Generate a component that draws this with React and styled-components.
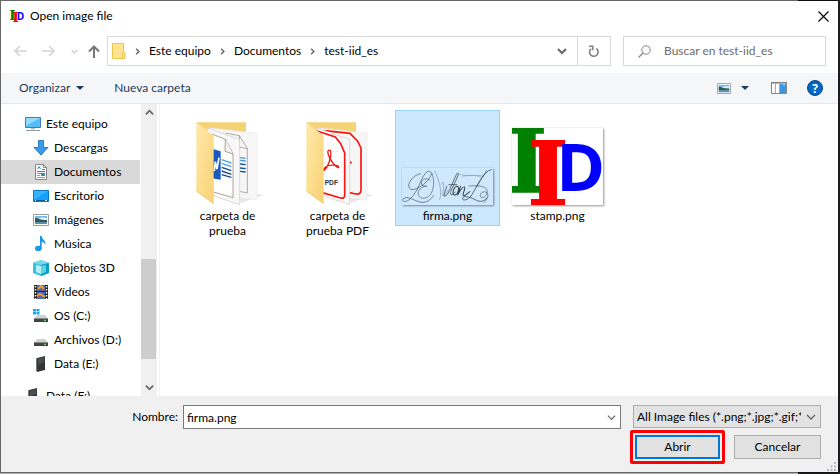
import React, { useState } from "react";
import styled, { createGlobalStyle, css } from "styled-components";

const Global = createGlobalStyle`
  * { box-sizing: border-box; }
  body {
    margin: 0;
    font-family: Lato, "Open Sans", sans-serif;
    font-size: 12px;
    line-height: 16px;
    color: #000;
  }
  button, input, select { font: inherit; color: inherit; margin: 0; }
  svg { display: block; flex: none; }
`;

const Desktop = styled.div`
  display: flex;
  height: 100vh;
  min-height: 320px;
  padding: 0 2px 1px 0;
  background: linear-gradient(90deg, #b0b0b0 95%, #1c1c1e 95%);
`;

const Dialog = styled.main`
  flex: 1;
  min-width: 0;
  display: flex;
  flex-direction: column;
  border: 1px solid rgba(0, 0, 0, 0.42);
  border-right: 0;
  background: #fff;
  background-clip: padding-box;
`;

const PlainButton = styled.button`
  display: flex;
  align-items: center;
  justify-content: center;
  padding: 0;
  border: 0;
  background: none;
`;

const TitleBar = styled.header`
  display: flex;
  align-items: center;
  gap: 6px;
  height: 30px;
  padding: 0 9px;
`;

const Title = styled.h1`
  flex: 1;
  margin: 0;
  font-size: 12px;
  font-weight: 400;
`;

const NavBar = styled.div`
  display: flex;
  align-items: center;
  height: 42px;
  padding: 0 12px 2px 13px;
`;

const History = styled.div`
  display: grid;
  grid-template-columns: 28px 29px 17px 19px;
  justify-items: start;
  align-items: center;
`;

const Address = styled.div`
  flex: 1;
  min-width: 0;
  display: flex;
  align-items: stretch;
  height: 30px;
  border: 1px solid #d9d9d9;
`;

const Crumbs = styled.nav`
  flex: 1;
  min-width: 0;
  display: flex;
  align-items: center;
  gap: 8px;
  padding-left: 4px;
  overflow: hidden;
  white-space: nowrap;
`;

const Crumb = styled(PlainButton)`
  white-space: nowrap;
`;

const AddressButton = styled(PlainButton)`
  width: ${(p) => p.$width}px;
  border-left: ${(p) => (p.$divided ? "1px solid #d9d9d9" : "0")};
`;

const Search = styled.label`
  display: flex;
  align-items: center;
  gap: 13px;
  width: 25%;
  height: 30px;
  margin-left: 12px;
  padding-left: 14px;
  border: 1px solid #d9d9d9;
`;

const SearchInput = styled.input`
  flex: 1;
  min-width: 0;
  padding: 0;
  border: 0;
  outline: 0;
  background: none;
  &::placeholder { color: #6d6d6d; opacity: 1; }
`;

const Toolbar = styled.div`
  display: flex;
  align-items: center;
  height: 31px;
  padding: 0 15px 0 18px;
  border-bottom: 1px solid #e6e6e6;
  background: #f5f6f7;
  color: #1e395b;
`;

const ToolButton = styled(PlainButton)`
  gap: 6px;
  margin-right: ${(p) => p.$after || 0}px;
`;

const Spacer = styled.div`
  flex: 1;
`;

const Body = styled.div`
  flex: 1;
  min-height: 0;
  display: flex;
`;

const Tree = styled.nav`
  flex: none;
  width: 139px;
  padding-top: 8px;
  overflow: hidden;
`;

const TreeItem = styled(PlainButton)`
  justify-content: flex-start;
  gap: 5px;
  width: 100%;
  height: 24px;
  padding-left: ${(p) => (p.$level === 1 ? 24 : 32)}px;
  margin-top: ${(p) => (p.$detached ? 8 : 0)}px;
  background: ${(p) => (p.$selected ? "#d9d9d9" : "transparent")};
  white-space: nowrap;
`;

const ScrollBar = styled.div`
  flex: none;
  display: flex;
  flex-direction: column;
  width: 17px;
  margin-left: 1px;
  background: #f0f0f0;
  border-right: 1px solid #fff;
`;

const ScrollButton = styled(PlainButton)`
  height: 17px;
`;

const ScrollTrack = styled.div`
  flex: 1;
  display: flex;
  align-items: flex-end;
  padding-bottom: 20px;
`;

const ScrollThumb = styled.div`
  width: 15px;
  height: 42%;
  background: #cdcdcd;
`;

const Files = styled.section`
  flex: 1;
  min-width: 0;
  display: flex;
  flex-wrap: wrap;
  align-content: flex-start;
  align-items: flex-start;
  gap: 5px;
  margin-left: 1px;
  padding: 6px 15px;
  border-left: 1px solid #f2f2f2;
`;

const Tile = styled.button`
  display: flex;
  flex-direction: column;
  align-items: center;
  justify-content: flex-start;
  width: 105px;
  min-height: 116px;
  padding: 1px 0;
  border: 1px solid transparent;
  background: none;
  line-height: 15px;
  ${(p) => p.$selected && css`
    border-color: #99d1ff;
    background: #cce8ff;
  `}
`;

const Preview = styled.span`
  display: flex;
  flex-direction: column;
  justify-content: flex-end;
  align-items: center;
  width: 96px;
  height: 95px;
  padding-bottom: 2px;
  margin-bottom: 1px;
`;

const Thumb = styled.span`
  background: ${(p) => (p.$clear ? "#cfe8fc" : "#fff")};
  box-shadow: 1px 1px 2px rgba(0, 0, 0, 0.4), 0 0 1px rgba(0, 0, 0, 0.2);
`;

const TileLabel = styled.span`
  width: 76px;
`;

const Footer = styled.footer`
  display: flex;
  flex-direction: column;
  height: 76px;
  padding: 9px 2px 2px 16px;
  background: #f0f0f0;
`;

const FieldRow = styled.div`
  display: flex;
  gap: 12px;
  padding-right: 15px;
`;

const NameLabel = styled.label`
  width: 166px;
  padding: 4px 5px 0 0;
  margin-right: -12px;
  text-align: right;
`;

const Combo = styled.div`
  flex: 1;
  min-width: 0;
  display: flex;
  height: 24px;
  border: 1px solid #7a7a7a;
  background: #fff;
`;

const ComboInput = styled.input`
  flex: 1;
  min-width: 0;
  padding: 2px 3px 0;
  border: 0;
  outline: 0;
  background: none;
`;

const ComboButton = styled(PlainButton)`
  width: 17px;
`;

const FilterBox = styled.div`
  display: grid;
  align-items: center;
  width: 188px;
  height: 23px;
  border: 1px solid #adadad;
  background: #e3e3e3;
  & > * { grid-area: 1 / 1; }
  & > svg { justify-self: end; margin-right: 4px; pointer-events: none; }
`;

const FilterSelect = styled.select`
  appearance: none;
  width: 167px;
  height: 21px;
  padding: 0 0 0 3px;
  border: 0;
  outline: 0;
  background: transparent;
  text-overflow: clip;
`;

const ActionRow = styled.div`
  display: flex;
  justify-content: flex-end;
  align-items: flex-start;
  gap: 9px;
  margin-top: 1px;
  padding-right: 15px;
`;

const Highlight = styled.div`
  padding: 2px;
  border: 3px solid #fb0007;
  border-radius: 2px;
`;

const Action = styled.button`
  display: block;
  width: ${(p) => (p.$primary ? 85 : 87)}px;
  height: 24px;
  padding: 0;
  margin-top: ${(p) => (p.$primary ? 0 : 5)}px;
  border: ${(p) => (p.$primary ? "2px solid #0078d7" : "1px solid #adadad")};
  background: #e1e1e1;
`;

const GripCorner = styled.div`
  display: flex;
  justify-content: flex-end;
  margin-top: -2px;
`;

/* ---------- drawings ---------- */

const Chevron = ({ dir = "down", size = 10, color = "#666", width = 1.5 }) => {
  const d = { down: "M1 3l4 4 4-4", up: "M1 7l4-4 4 4", right: "M3 1l4 4-4 4" }[dir];
  return (
    <svg width={size} height={size} viewBox="0 0 10 10" fill="none" stroke={color} strokeWidth={width}>
      <path d={d} />
    </svg>
  );
};

const Caret = () => (
  <svg width="8" height="4" viewBox="0 0 8 4"><path d="M0 0h8L4 4z" fill="#1e395b" /></svg>
);

const Arrow = ({ dir }) => {
  const d = {
    left: "M13 6H1M6 1L1 6l5 5",
    right: "M0 6h12M7 1l5 5-5 5",
    up: "M6 13V1.500M1 6.500l5-5 5 5",
  }[dir];
  return (
    <svg width="13" height="13" viewBox="0 0 13 13" fill="none" stroke={dir === "up" ? "#777" : "#d5d5d5"} strokeWidth={dir === "up" ? 2 : 1.6}>
      <path d={d} />
    </svg>
  );
};

const CloseIcon = () => (
  <svg width="11" height="11" viewBox="0 0 11 11" stroke="#000" strokeWidth="1.1"><path d="M.5.5l10 10M10.500.5l-10 10" /></svg>
);

const RefreshIcon = () => (
  <svg width="12" height="13" viewBox="0 0 12 13" fill="none" stroke="#808080" strokeWidth="1.6">
    <path d="M8.300 3.500A4.300 4.300 0 1 1 3 3.800" />
    <path d="M1 1.300h3.700v4" />
  </svg>
);

const SearchIcon = () => (
  <svg width="13" height="13" viewBox="0 0 13 13" fill="none" stroke="#858585">
    <circle cx="8" cy="5" r="4.200" /><path d="M5 8L.5 12.500" strokeWidth="1.300" />
  </svg>
);

const FolderSmall = () => (
  <svg width="14" height="16" viewBox="0 0 14 16">
    <path d="M.5.5h11v9h1.500v6H.5z" fill="#ffe38f" stroke="#ebc54d" />
    <path d="M10.500 15V9.500" stroke="#ebc54d" />
  </svg>
);

const Iid = ({ width, height }) => (
  <svg width={width} height={height} viewBox="0 0 270 229" preserveAspectRatio="none">
    <g fontFamily="'DejaVu Serif'" fontWeight="700" fontSize="260" textAnchor="middle">
      <text x="44" y="190" fill="#008000" stroke="#008000" strokeWidth="4">I</text>
      <text x="107" y="228" fill="#f00" stroke="#f00" strokeWidth="4">I</text>
    </g>
    <text x="131" y="187" fill="#00f" fontFamily="'Open Sans'" fontWeight="700" fontSize="196">D</text>
  </svg>
);

const Landscape = ({ width, height }) => (
  <svg width={width} height={height} viewBox="0 0 16 12" preserveAspectRatio="none">
    <path d="M.5.5h15v11H.5z" fill="#fff" stroke="#9b9b9b" />
    <path d="M2 2h12v8H2z" fill="#77b8ea" />
    <path d="M6 4.500c2-1.500 5-1 8-.5v2H7z" fill="#e4f2fb" />
    <path d="M2 4c3 0 4 2 12 2v2H2z" fill="#315c4d" />
    <path d="M2 8h12v2H2z" fill="#5d8fb2" />
  </svg>
);

const PaneIcon = () => (
  <svg width="16" height="12" viewBox="0 0 16 12">
    <path d="M.5.5h15v11H.5z" fill="#fff" stroke="#858585" />
    <path d="M0 .8h16" stroke="#858585" strokeWidth="1.600" />
    <path d="M4.500 2v9M8.500 2v9" stroke="#aaa" />
    <path d="M9 2h6v9H9z" fill="#3c96e0" />
    <path d="M12 3h2" stroke="#b8defa" />
  </svg>
);

const HelpIcon = () => (
  <svg width="16" height="16" viewBox="0 0 16 16">
    <circle cx="8" cy="8" r="7.500" fill="#0067c5" stroke="#074984" />
    <text x="8" y="12.500" fill="#fff" textAnchor="middle" fontFamily="'Open Sans'" fontSize="12" fontWeight="700">?</text>
  </svg>
);

const treeArt = {
  pc: <>
    <path d="M.5 1.500h15v10H.5z" fill="#55bdf5" stroke="#3e82ab" />
    <path d="M1 2h14L1 10z" fill="#94dbff" />
    <path d="M6 12h4v1.500H6z" fill="#b5c2ca" /><path d="M1 14.500h14" stroke="#8b9aa5" />
  </>,
  down: <path d="M5.500.5h5v7h4.500L8 15 1 7.500h4.500z" fill="#3c9aeb" stroke="#2a7dc5" />,
  doc: <>
    <path d="M2.500.5h8l3 3v12h-11z" fill="#fff" stroke="#858585" />
    <path d="M10.500.5v3h3" fill="none" stroke="#858585" />
    <path d="M4.500 5L6 2.500 7.500 5M9 5.500h3M4 7.500h8" fill="none" stroke="#3588bd" />
    <path d="M4 9.500h4M4 11.500h3M4 13.500h8" stroke="#8c9dab" /><path d="M8 9h4v3H8z" fill="#378cb9" />
  </>,
  desk: <>
    <path d="M.5 2.500h15v11H.5z" fill="#12a1fb" stroke="#0a78c4" />
    <path d="M1 3h14L1 12z" fill="#37b2ff" /><path d="M1 12.500h14" stroke="#075b9c" />
    <path d="M2 12.500h1M12 12.500h2" stroke="#fff" />
  </>,
  music: <>
    <ellipse cx="5.300" cy="12.500" rx="3.300" ry="2.700" fill="#1899e6" />
    <path d="M7 0h1.700c0 4 4.800 3.700 3.600 9.200-.5-2.400-1.600-3-3.600-3.200v6.500H7z" fill="#1899e6" />
  </>,
  cube: <>
    <path d="M0 3l8-3 8 3v10l-8 3-8-3z" fill="#35c0dc" />
    <path d="M0 3l8-3 8 3-8 2z" fill="#74d9e9" />
    <path d="M3 5l5 1v8l-5-2z" fill="#b4eff5" /><path d="M8 5l8-2v10l-8 3z" fill="#0d9fc3" /><path d="M8 6l5-1v7l-5 2z" fill="#5ed3e6" />
  </>,
  video: <>
    <path d="M1 1h14v14H1z" fill="#222" />
    <path d="M4 1h8v14H4z" fill="#456bc1" />
    <path d="M2.500 2v13M13.500 2v13" stroke="#f7f7f7" strokeWidth="1.500" strokeDasharray="1.500 1.500" />
    <path d="M5 5l3-3 3 3M4 12l3-2 5 3" stroke="#e8a02f" fill="none" strokeWidth="2" /><path d="M4 7.500h8" stroke="#20252b" />
    <path d="M8 5h3v2H8zM5 12h2v2H5z" fill="#c44c2d" />
  </>,
  drive: <>
    <path d="M4 7h8l3 4H1z" fill="#cfd1d3" /><path d="M1 10.500h14V14H1z" fill="#414345" />
    <path d="M11 12.300h2" stroke="#55e65a" strokeWidth="1.300" />
  </>,
  stick: <>
    <path d="M4 2l8-2v14l-8 2z" fill="#333537" /><path d="M4 2l-1 .5v12L4 16z" fill="#77797b" />
    <path d="M5 3l6-2v5L5 9z" fill="#4c4e50" />
  </>,
};
treeArt.osdrive = <>
  {treeArt.drive}
  <path d="M0 1h3v2.500H0zM3.500 1h3v2.500h-3zM0 4h3v2.500H0zM3.500 4h3v2.500h-3z" fill="#16a9e8" />
</>;

const TreeIcon = ({ name }) =>
  name === "image" ? <Landscape width={16} height={12} /> : (
    <svg width="16" height="16" viewBox="0 0 16 16">{treeArt[name]}</svg>
  );

const WordSheets = () => (
  <>
    <path d="M105 54l42 8 24 38v134l-24-5" fill="none" stroke="#8e8774" strokeWidth="2" />
    <path d="M147 62v34l24 5" fill="none" stroke="#8e8774" strokeWidth="2" />
    <path d="M149 128l17 2M149 136l17 2" stroke="#4799d8" strokeWidth="4" />
    <path d="M149 147l17 2M149 159l17 2M149 169l17 2" stroke="#174d9d" strokeWidth="4" />
  </>
);

const PdfSheets = () => (
  <path d="M72 47l77 8 22 22 11 22v125q0 15-15 13l-20-4" fill="none" stroke="#fa1510" strokeWidth="5" />
);

const FolderLarge = ({ kind }) => (
  <svg width="70" height="85" viewBox="8 15 210 255">
    <defs>
      <linearGradient id={`flap-${kind}`} x1="0" y1="0" x2="1" y2="1">
        <stop offset="0" stopColor="#ffe9ab" /><stop offset="1" stopColor="#f8d272" />
      </linearGradient>
    </defs>
    <path d="M148 250l54-12q16 0 15 3l-65 23z" fill="#ddd" opacity=".7" />
    <path d="M18 22h149v90H60z" fill="#f4d276" />
    <path d="M58 38l142 16v200l-60-4z" fill="#f6f6f6" stroke="#ddd" />
    {kind === "word" ? <WordSheets /> : <PdfSheets />}
    <path d="M50 38l98 36v195l-78-26z" fill="#f8f8f8" stroke="#ccc" strokeWidth="2" />
    {kind === "word" ? (
      <>
        <path d="M65 57l40 16 23 43v132l-58-17" fill="#fff" stroke="#85795d" strokeWidth="2" />
        <path d="M105 73l-1 36 24 8" fill="#f2f2f2" stroke="#85795d" strokeWidth="2" />
        <path d="M60 100l31 9v85l-31-5z" fill="#185abd" />
        <path d="M72 168l3-28 5 22 6-34" fill="none" stroke="#fff" strokeWidth="5" />
        <path d="M94 134l29 10M94 145l29 10" stroke="#4ba5e2" strokeWidth="4" />
        <path d="M94 157l29 10M94 168l29 10M94 179l29 8" stroke="#17439c" strokeWidth="4" />
      </>
    ) : (
      <>
        <path d="M50 48l55 18 16 20 12 28v126q0 12-12 9l-55-16" fill="#fff" stroke="#fa1510" strokeWidth="5" />
        <path d="M89 106c-10-3-7 12 0 24 7 14 24 33 26 26 2-7-29-8-38-1-12 9-10 15-4 9 12-10 24-50 16-58z" fill="none" stroke="#ef1712" strokeWidth="4" />
        <path d="M150 137l6 6-6 5z" fill="#ef1712" />
        <text x="73" y="211" fontFamily="'Liberation Sans'" fontWeight="700" fontSize="20" fill="#333">PDF</text>
      </>
    )}
    <path d="M18 22l52 40v205l-52-38z" fill={`url(#flap-${kind})`} />
    <path d="M18 228l52 38" stroke="#e8c15c" strokeWidth="2" />
  </svg>
);

const Signature = () => (
  <svg width="91" height="37" viewBox="48 188 272 109" fill="none" stroke="#33414b" strokeWidth="2.200" strokeLinecap="round">
    <path d="M103 204C70 212 58 248 78 252C105 252 152 203 130 197C108 196 104 248 74 278C58 294 46 287 52 279C64 268 88 288 108 290C124 290 134 282 142 270" strokeWidth="1.800" />
    <path d="M133 225c-9-11-27-5-27 7 0 9 9 11 16 9-15 0-28 14-25 26 4 15 27 14 37-2 9-15 12-37 4-61" strokeWidth="1.600" />
    <path d="M146 196c8 20 24 52 15 85M166 236c3-9 8-9 7 2l-3 30c-1 10 11-3 15-14" stroke="#6c7a84" strokeWidth="1.500" />
    <path d="M182 242l-8 23c-3 9 6 8 12-3l22-50c6-14 11-13 7-1l-21 46c-5 14 5 13 13 2M188 237h24" />
    <path d="M213 242c-10 1-18 25-8 26 10 1 17-25 8-26zm10 0l-9 27c6-12 16-28 21-25 4 4-9 25-3 26 5 1 12-8 19-12" strokeWidth="3" />
    <path d="M217 205c25 9 53 1 75 7M228 212c25-5 40-1 55 0" stroke="#7e8d98" strokeWidth="1.500" />
    <path d="M315 192c-26 5-45 57-61 79-11 15-28 14-25 6 5-10 29 0 42 7 10 5 23 4 30-7" />
    <path d="M248 241c26-2 48 0 53 10 8 16-13 31-18 22-5-10 11-21 20-10 5 8-1 21-10 27M301 195l-30 48" strokeWidth="1.700" />
  </svg>
);

const Grip = () => (
  <svg width="9" height="9" viewBox="0 0 9 9" fill="#b8b8b8">
    <path d="M7 0h2v2H7zM3.500 3.500h2v2h-2zM7 3.500h2v2H7zM0 7h2v2H0zM3.500 7h2v2h-2zM7 7h2v2H7z" />
  </svg>
);

/* ---------- content ---------- */

const places = [
  ["Este equipo", "pc", 1],
  ["Descargas", "down", 2],
  ["Documentos", "doc", 2],
  ["Escritorio", "desk", 2],
  ["Imágenes", "image", 2],
  ["Música", "music", 2],
  ["Objetos 3D", "cube", 2],
  ["Vídeos", "video", 2],
  ["OS (C:)", "osdrive", 2],
  ["Archivos (D:)", "drive", 2],
  ["Data (E:)", "stick", 2],
  ["Data (F:)", "stick", 1],
];

const files = [
  { name: "carpeta de prueba", art: <FolderLarge kind="word" /> },
  { name: "carpeta de prueba PDF", art: <FolderLarge kind="pdf" /> },
  { name: "firma.png", framed: true, clear: true, art: <Signature /> },
  { name: "stamp.png", framed: true, art: <Iid width={91} height={77} /> },
];

export default function App() {
  const [fileName, setFileName] = useState("firma.png");
  return (
    <>
      <Global />
      <Desktop>
        <Dialog>
          <TitleBar>
            <Iid width={14} height={12} />
            <Title>Open image file</Title>
            <PlainButton aria-label="Cerrar"><CloseIcon /></PlainButton>
          </TitleBar>

          <NavBar>
            <History>
              <PlainButton aria-label="Atrás"><Arrow dir="left" /></PlainButton>
              <PlainButton aria-label="Adelante"><Arrow dir="right" /></PlainButton>
              <PlainButton aria-label="Recientes"><Chevron size={7} color="#d0d0d0" width={2} /></PlainButton>
              <PlainButton aria-label="Subir"><Arrow dir="up" /></PlainButton>
            </History>
            <Address>
              <Crumbs aria-label="Ruta">
                <FolderSmall />
                {["Este equipo", "Documentos", "test-iid_es"].map((c) => (
                  <React.Fragment key={c}>
                    <Chevron dir="right" size={7} width={2} />
                    <Crumb>{c}</Crumb>
                  </React.Fragment>
                ))}
              </Crumbs>
              <AddressButton $width={30} aria-label="Ubicaciones anteriores"><Chevron size={10} width={2} /></AddressButton>
              <AddressButton $width={33} $divided aria-label="Actualizar"><RefreshIcon /></AddressButton>
            </Address>
            <Search>
              <SearchIcon />
              <SearchInput type="search" placeholder="Buscar en test-iid_es" aria-label="Buscar en test-iid_es" />
            </Search>
          </NavBar>

          <Toolbar>
            <ToolButton $after={30}>Organizar <Caret /></ToolButton>
            <ToolButton>Nueva carpeta</ToolButton>
            <Spacer />
            <ToolButton $after={10} aria-label="Vista"><Landscape width={14} height={11} /></ToolButton>
            <ToolButton $after={22} aria-label="Más opciones"><Caret /></ToolButton>
            <ToolButton $after={20} aria-label="Panel de vista previa"><PaneIcon /></ToolButton>
            <ToolButton aria-label="Ayuda"><HelpIcon /></ToolButton>
          </Toolbar>

          <Body>
            <Tree aria-label="Ubicaciones">
              {places.map(([label, icon, level], i) => (
                <TreeItem key={label} $level={level} $selected={label === "Documentos"} $detached={i > 0 && level === 1}>
                  <TreeIcon name={icon} />
                  {label}
                </TreeItem>
              ))}
            </Tree>
            <ScrollBar>
              <ScrollButton aria-label="Desplazar arriba"><Chevron dir="up" size={9} width={2} /></ScrollButton>
              <ScrollTrack><ScrollThumb /></ScrollTrack>
              <ScrollButton aria-label="Desplazar abajo"><Chevron size={9} width={2} /></ScrollButton>
            </ScrollBar>
            <Files aria-label="Archivos">
              {files.map((f) => (
                <Tile key={f.name} $selected={f.name === "firma.png"}>
                  <Preview>
                    {f.framed ? <Thumb $clear={f.clear}>{f.art}</Thumb> : f.art}
                  </Preview>
                  <TileLabel>{f.name}</TileLabel>
                </Tile>
              ))}
            </Files>
          </Body>

          <Footer>
            <FieldRow>
              <NameLabel htmlFor="file-name">Nombre:</NameLabel>
              <Combo>
                <ComboInput id="file-name" value={fileName} onChange={(e) => setFileName(e.target.value)} />
                <ComboButton aria-label="Nombres recientes"><Chevron size={9} width={1.3} /></ComboButton>
              </Combo>
              <FilterBox>
                <FilterSelect aria-label="Tipo de archivo">
                  <option>All Image files (*.png;*.jpg;*.gif;*.bmp)</option>
                </FilterSelect>
                <Chevron size={10} width={1.3} />
              </FilterBox>
            </FieldRow>
            <ActionRow>
              <Highlight><Action $primary>Abrir</Action></Highlight>
              <Action>Cancelar</Action>
            </ActionRow>
            <GripCorner><Grip /></GripCorner>
          </Footer>
        </Dialog>
      </Desktop>
    </>
  );
}
